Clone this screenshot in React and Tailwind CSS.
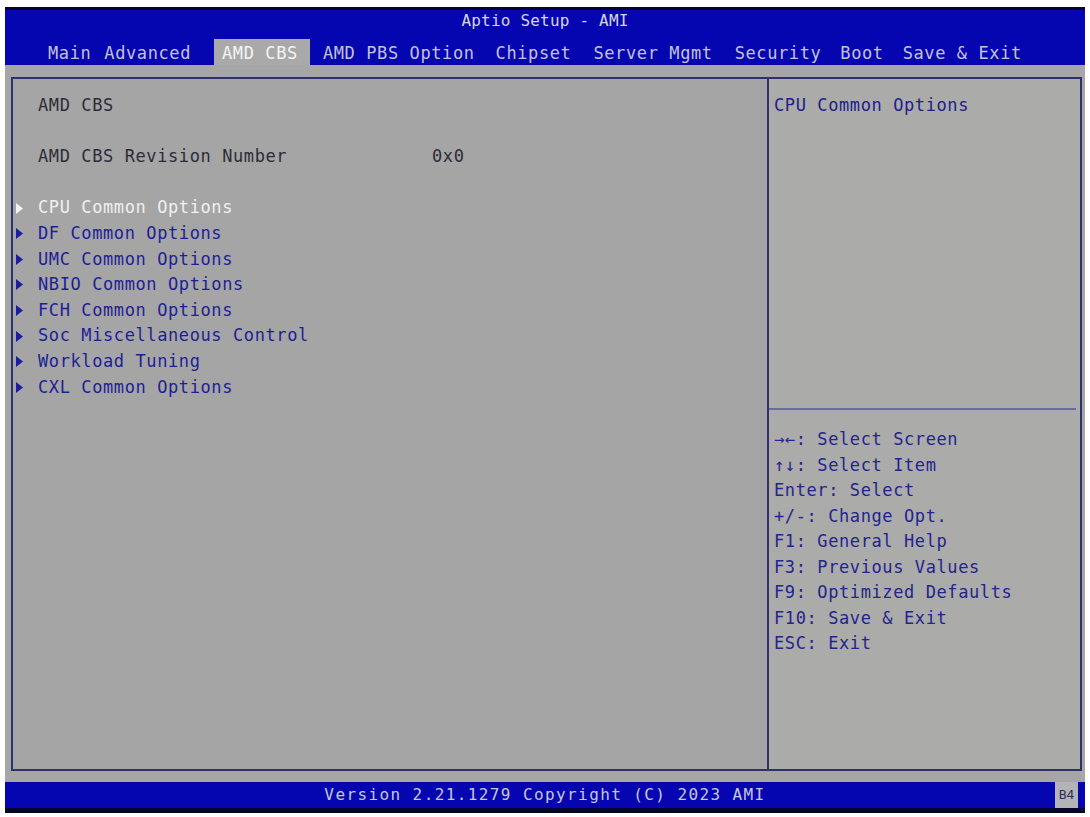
import React from 'react';

// spacing before each tab label, measured off the screen
const tabs = [
  { name: 'Main', cls: 'ml-[43px]' },
  { name: 'Advanced', cls: 'ml-[13px]' },
  { name: 'AMD CBS', cls: 'ml-[23px] pl-[8px] pr-[12px] bg-[#a9a9a9] text-[#f4f4f4]', active: true },
  { name: 'AMD PBS Option', cls: 'ml-[13px]' },
  { name: 'Chipset', cls: 'ml-[21px]' },
  { name: 'Server Mgmt', cls: 'ml-[22px]' },
  { name: 'Security', cls: 'ml-[22px]' },
  { name: 'Boot', cls: 'ml-[19px]' },
  { name: 'Save & Exit', cls: 'ml-[19px]' },
];

const menu = [
  'CPU Common Options',
  'DF Common Options',
  'UMC Common Options',
  'NBIO Common Options',
  'FCH Common Options',
  'Soc Miscellaneous Control',
  'Workload Tuning',
  'CXL Common Options',
];

const help = [
  '→←: Select Screen',
  '↑↓: Select Item',
  'Enter: Select',
  '+/-: Change Opt.',
  'F1: General Help',
  'F3: Previous Values',
  'F9: Optimized Defaults',
  'F10: Save & Exit',
  'ESC: Exit',
];

function Arrow({ selected }) {
  return (
    <svg width="7" height="11" viewBox="0 0 7 11" className="shrink-0">
      <path d="M0 0 L7 5.5 L0 11 Z" fill={selected ? '#f2f2f2' : '#1c1ca0'} />
    </svg>
  );
}

export default function App() {
  return (
    <div className="min-h-[817px] w-[1090px] bg-white pt-[7px] pl-[5px] font-['DejaVu_Sans_Mono',monospace] text-[17px] tracking-[0.6px]">
      <div className="w-[1080px] bg-[#a6a6a6]">
        {/* header */}
        <div className="h-[58px] border-t-[3px] border-[#06062a] bg-[#0606b0]">
          <div className="flex h-[21px] items-center justify-center text-[16px] tracking-[0.2px] text-[#d4d4e6]">
            Aptio Setup - AMI
          </div>
          <div className="flex h-[34px] items-end">
            {tabs.map((t) => (
              <div
                key={t.name}
                className={`flex h-[26px] items-center pt-[3px] ${t.active ? '' : 'text-[#c2c2dc]'} ${t.cls}`}
              >
                {t.name}
              </div>
            ))}
          </div>
        </div>

        {/* body */}
        <div className="pt-[12px] pl-[6px] pr-[3px]">
          <div className="flex h-[694px] border-2 border-[#30306a]">
            <div className="flex w-[754px] flex-col bg-[#a5a5a5] pt-[14px]">
              <div className="flex h-[25.6px] items-center pl-[25px] text-[#2c2c38]">AMD CBS</div>
              <div className="h-[25.6px]" />
              <div className="flex h-[25.6px] items-center pl-[25px] text-[#2c2c38]">
                <span className="w-[394px]">AMD CBS Revision Number</span>
                <span>0x0</span>
              </div>
              <div className="h-[25.6px]" />
              {menu.map((m, i) => (
                <div key={m} className="flex h-[25.6px] items-center pl-[3px]">
                  <Arrow selected={i === 0} />
                  <span className={`ml-[15px] ${i === 0 ? 'text-[#f0f0f0]' : 'text-[#1e1e96]'}`}>{m}</span>
                </div>
              ))}
            </div>
            <div className="flex flex-1 flex-col border-l-2 border-[#30306a] bg-[#ababaa]">
              <div className="mr-[4px] h-[331px] border-b-2 border-[#6a6aa6] pt-[14px] pl-[5px]">
                <div className="flex h-[25.6px] items-center text-[#20208a]">CPU Common Options</div>
              </div>
              <div className="flex flex-col pt-[17px] pl-[5px]">
                {help.map((h) => (
                  <div key={h} className="flex h-[25.5px] items-center text-[#24248e]">{h}</div>
                ))}
              </div>
            </div>
          </div>
        </div>

        {/* footer */}
        <div className="mt-[11px] flex h-[31px] border-b-[5px] border-[#06062a] bg-[#0606b0]">
          <div className="flex flex-1 items-center justify-center pl-[30px] text-[16px] tracking-[1.4px] text-[#c6c6dc]">
            Version 2.21.1279 Copyright (C) 2023 AMI
          </div>
          <div className="mr-[7px] flex w-[23px] items-center justify-center bg-[#b4b4b8] text-[13px] tracking-normal text-[#30305a]">
            B4
          </div>
        </div>
      </div>
    </div>
  );
}
